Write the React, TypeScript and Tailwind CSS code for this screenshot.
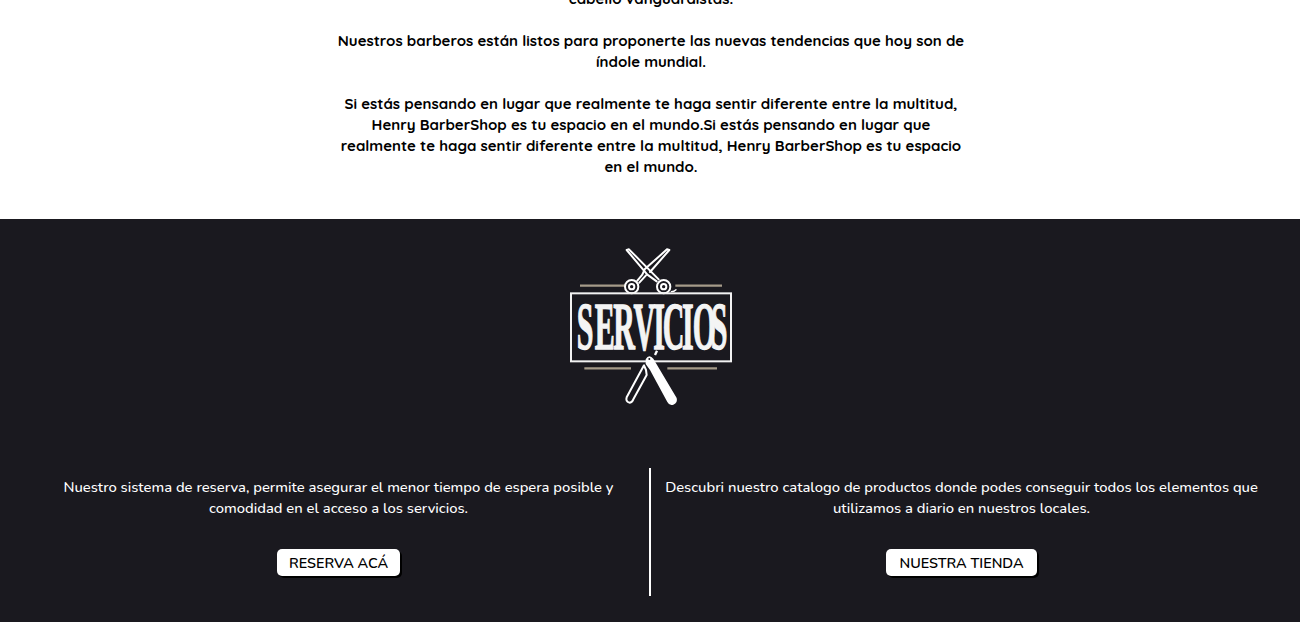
function ServiciosLogo() {
  return (
    <svg viewBox="0 0 600 525" className="mx-auto block h-[175px] w-[200px]" fill="none">
      {/* side rules */}
      <path d="M90 137H224M376 137H516M103 385H243M352 385H501" stroke="#a59b89" strokeWidth="7" />
      {/* scissors */}
      <g stroke="#fff" strokeWidth="6" strokeLinejoin="round" strokeLinecap="round">
        <path d="M230 30 L237 28 L326 118 M230 30 L292 104 L320 124" />
        <path d="M358 30 L351 28 L284 88 L277 104 L262 122 M358 30 L300 96 M288 106 L268 128" />
        <circle cx="245" cy="140" r="20" />
        <circle cx="245" cy="140" r="8" />
        <circle cx="341" cy="140" r="20" />
        <circle cx="341" cy="140" r="8" />
        <path d="M364 155 Q372 155 378 149" strokeWidth="4" />
      </g>
      {/* plate */}
      <rect x="63" y="160" width="480" height="204" stroke="#f2f2f2" strokeWidth="6" />
      <text
        transform="scale(0.45 1)"
        x="178 298 422 556 689 751 880 951 1071"
        y="327"
        fontFamily="'Liberation Serif', serif"
        fontWeight="700"
        fontSize="200"
        fill="#f4f4f4"
        stroke="#f4f4f4"
        strokeWidth="4"
      >
        SERVICIOS
      </text>
      <path d="M321 332 L315 345" stroke="#fff" strokeWidth="7" />
      {/* razor */}
      <path
        d="M287 358 Q297 340 310 356 L380 474 Q384 488 370 494 Q358 498 352 486 L300 390 L287 372 Z"
        fill="#fff"
      />
      <circle cx="298" cy="357" r="3" fill="#1a191f" />
      <path
        d="M282 376 L230 472 Q226 484 238 488 Q246 488 250 478 L290 405 L288 390 Z"
        stroke="#fff"
        strokeWidth="6"
        strokeLinejoin="round"
      />
    </svg>
  );
}

function ServiceColumn({ lines, cta, ctaWidth }: { lines: string[]; cta: string; ctaWidth: string }) {
  return (
    <div className="flex flex-col items-center pt-[9px] text-center">
      <p className="text-[14.8px] leading-[21px] font-medium text-white">
        {lines.map((line) => (
          <span key={line} className="block whitespace-nowrap">
            {line}
          </span>
        ))}
      </p>
      <a className={`mt-[30px] flex h-[27px] items-center justify-center rounded-[5px] bg-white pt-[2px] text-[14.4px] font-semibold text-black shadow-[2px_2px_0_#000] ${ctaWidth}`}>
        {cta}
      </a>
    </div>
  );
}

export default function App() {
  return (
    <div className='h-[622px] overflow-hidden bg-white font-["Nunito","Open_Sans",sans-serif]'>
      <section className="flex h-[219px] flex-col items-center overflow-hidden">
        <div className='-mt-[12px] ml-[2px] w-[640px] text-center font-["Quicksand","Nunito",sans-serif] text-[15px] leading-[21px] font-bold text-black'>
          <p className="mb-[21px]">cabello vanguardistas.</p>
          <p className="mb-[21px]">
            Nuestros barberos están listos para proponerte las nuevas tendencias que hoy son de
            <br />
            índole mundial.
          </p>
          <p>
            Si estás pensando en lugar que realmente te haga sentir diferente entre la multitud,
            <br />
            Henry BarberShop es tu espacio en el mundo.Si estás pensando en lugar que
            <br />
            realmente te haga sentir diferente entre la multitud, Henry BarberShop es tu espacio
            <br />
            en el mundo.
          </p>
        </div>
      </section>
      <section className="h-[403px] bg-[#1a191f] pt-[21px]">
        <ServiciosLogo />
        <div className="mt-[53px] grid grid-cols-[1fr_2px_1fr] px-[28px]">
          <ServiceColumn
            lines={[
              'Nuestro sistema de reserva, permite asegurar el menor tiempo de espera posible y',
              'comodidad en el acceso a los servicios.',
            ]}
            cta="RESERVA ACÁ"
            ctaWidth="w-[123px]"
          />
          <div className="h-[128px] bg-white" />
          <ServiceColumn
            lines={[
              'Descubri nuestro catalogo de productos donde podes conseguir todos los elementos que',
              'utilizamos a diario en nuestros locales.',
            ]}
            cta="NUESTRA TIENDA"
            ctaWidth="w-[151px]"
          />
        </div>
      </section>
    </div>
  );
}
